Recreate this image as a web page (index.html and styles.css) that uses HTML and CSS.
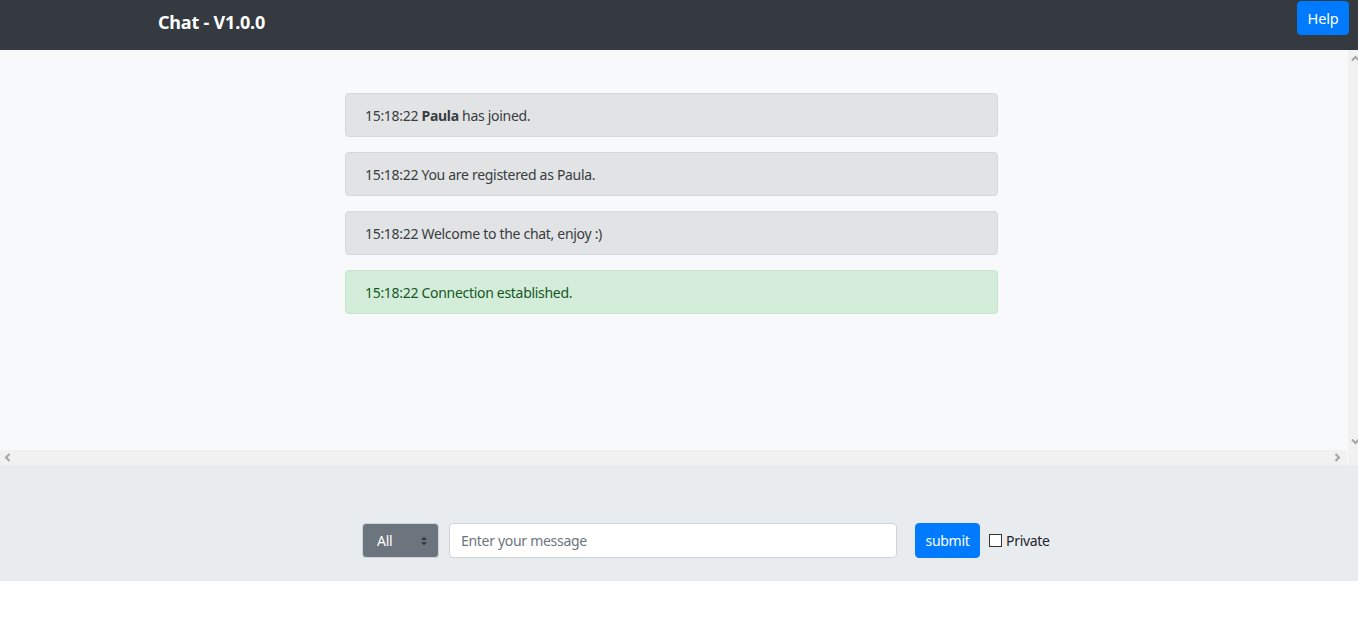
FILE: index.html
```html
<!DOCTYPE html>
<html>
<head>
<meta charset="utf-8">
<link rel="stylesheet" href="styles.css">
</head>
<body>
<nav class="navbar">
  <span class="brand">Chat - V1.0.0</span>
  <button class="btn btn-primary help">Help</button>
</nav>
<section class="scroller">
  <main class="messages">
    <div class="list">
      <div class="alert alert-secondary">15:18:22 <b>Paula</b> has joined.</div>
      <div class="alert alert-secondary">15:18:22 You are registered as Paula.</div>
      <div class="alert alert-secondary">15:18:22 Welcome to the chat, enjoy :)</div>
      <div class="alert alert-success">15:18:22 Connection established.</div>
    </div>
  </main>
  <div class="vbar">
    <svg width="9" height="9" viewBox="0 0 9 9"><path d="M1 6.5 L4.5 3 L8 6.5" fill="none" stroke="#a3a3a3" stroke-width="2"/></svg>
    <svg width="9" height="9" viewBox="0 0 9 9"><path d="M1 2.5 L4.5 6 L8 2.5" fill="none" stroke="#a3a3a3" stroke-width="2"/></svg>
  </div>
  <div class="hbar">
    <svg width="9" height="9" viewBox="0 0 9 9"><path d="M6.5 1 L3 4.5 L6.5 8" fill="none" stroke="#a3a3a3" stroke-width="2"/></svg>
    <svg width="9" height="9" viewBox="0 0 9 9"><path d="M2.5 1 L6 4.5 L2.5 8" fill="none" stroke="#a3a3a3" stroke-width="2"/></svg>
  </div>
</section>
<footer class="composer">
  <form class="row">
    <div class="select">
      <span>All</span>
      <svg width="8" height="12" viewBox="0 0 8 12"><path d="M4 1.5 L7 5 H1 Z M4 10.5 L7 7 H1 Z" fill="#343a40"/></svg>
    </div>
    <input class="input" type="text" placeholder="Enter your message">
    <button class="btn btn-primary submit" type="button">submit</button>
    <label class="check"><span class="box"></span>Private</label>
  </form>
</footer>
</body>
</html>
```
FILE: styles.css
```css
html, body { margin: 0; padding: 0; overflow: hidden; }
body {
  font-family: "Segoe UI", "Noto Sans", "Open Sans", sans-serif;
  font-size: 14px;
  letter-spacing: -0.3px;
  color: #212529;
  background: #fff;
  width: 1358px;
}
.navbar {
  height: 50px;
  background: #343a40;
  display: flex;
  align-items: flex-start;
  justify-content: space-between;
  padding: 0 9px 0 158px;
  box-sizing: border-box;
}
.brand {
  color: #fff;
  font-weight: 700;
  font-size: 18px;
  letter-spacing: -0.2px;
  line-height: 26px;
  margin-top: 9px;
}
.btn {
  font-family: inherit;
  font-size: 14.5px;
  letter-spacing: -0.2px;
  border: 1px solid transparent;
  border-radius: 4px;
  padding: 0;
  height: 34px;
  line-height: 32px;
  cursor: pointer;
}
.btn-primary { background: #007bff; color: #fff; border-color: #007bff; }
.help { margin-top: 1px; width: 52px; }
.scroller {
  height: 415px;
  width: 1362px;
  display: grid;
  grid-template-columns: 1347px 15px;
  grid-template-rows: 400px 15px;
  overflow: hidden;
}
.messages {
  background: #f8f9fa;
  overflow: hidden;
}
.vbar {
  grid-column: 2;
  grid-row: 1 / span 2;
  background: #f1f1f1;
  border-left: 1px solid #fafafa;
  box-sizing: border-box;
  display: flex;
  flex-direction: column;
  justify-content: space-between;
  align-items: center;
  padding: 4px 0 19px;
}
.hbar {
  grid-column: 1;
  grid-row: 2;
  background: #f1f1f1;
  display: flex;
  justify-content: space-between;
  align-items: center;
  padding: 0 5px 0 3px;
}
.list {
  width: 653px;
  margin: 43px 0 0 345px;
  display: flex;
  flex-direction: column;
  gap: 15px;
}
.alert {
  height: 44px;
  box-sizing: border-box;
  padding: 0 19px;
  line-height: 44px;
  border: 1px solid;
  border-radius: 4px;
}
.alert-secondary { background: #e2e3e5; border-color: #d6d8db; color: #383d41; }
.alert-success { background: #d4edda; border-color: #c3e6cb; color: #155724; }
.composer {
  height: 116px;
  background: #e9ecef;
  box-sizing: border-box;
  padding-top: 58px;
}
.row {
  display: flex;
  align-items: center;
  margin: 0 0 0 362px;
}
.select {
  width: 77px;
  height: 35px;
  box-sizing: border-box;
  background: #6c757d;
  border: 1px solid #ced4da;
  border-radius: 4px;
  color: #fff;
  display: flex;
  align-items: center;
  justify-content: space-between;
  padding: 0 10px 0 14px;
}
.input {
  margin-left: 10px;
  width: 448px;
  height: 35px;
  box-sizing: border-box;
  border: 1px solid #ced4da;
  border-radius: 4px;
  background: #fff;
  padding: 0 11px;
  font-family: inherit;
  font-size: 14px;
  letter-spacing: -0.3px;
  color: #495057;
}
.input::placeholder { color: #6c757d; }
.submit { margin-left: 18px; width: 65px; height: 35px; font-size: 14px; letter-spacing: -0.3px; }
.check {
  margin-left: 9px;
  display: flex;
  align-items: center;
  color: #212529;
}
.box {
  width: 11px;
  height: 11px;
  border: 1px solid #333;
  background: #fff;
  margin-right: 4px;
}
```
